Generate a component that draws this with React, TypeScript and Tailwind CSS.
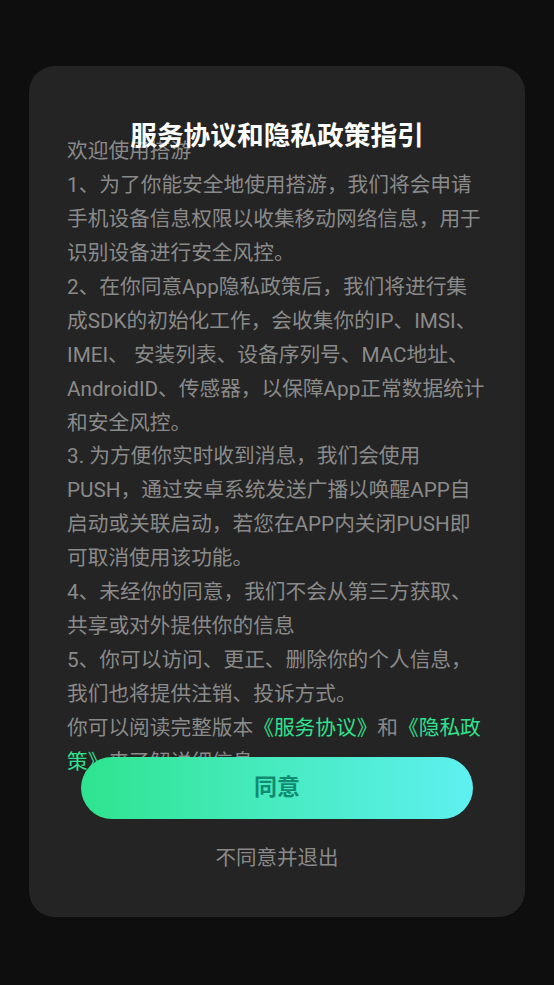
import React from "react";

const font = { fontFamily: 'Roboto, "Noto Sans CJK SC", sans-serif' };

export default function App() {
  return (
    <div
      className="min-h-[985px] w-full bg-[#0e0e0e] pt-[66px] font-[Roboto,'Noto_Sans_CJK_SC',sans-serif]"
      style={font}
    >
      <div className="mx-[29px] rounded-[26px] bg-[#242424] px-[38px] pt-[50px] pb-[44px]">
        <h1 className="relative z-10 h-[40px] text-center text-[26.7px] font-bold leading-[40px] text-white">
          服务协议和隐私政策指引
        </h1>
        <div className="-mt-[21px] text-[20.7px] leading-[33.93px] text-[#8a8a8a]">
          <p>欢迎使用搭游</p>
          <p>1、为了你能安全地使用搭游，我们将会申请手机设备信息权限以收集移动网络信息，用于识别设备进行安全风控。</p>
          <p>
            2、在你同意App隐私政策后，我们将进行集成SDK的初始化工作，会收集你的IP、IMSI、IMEI、 安装列表、设备序列号、MAC地址、AndroidID、传感器，以保障App正常数据统计和安全风控。
          </p>
          <p>3. 为方便你实时收到消息，我们会使用PUSH，通过安卓系统发送广播以唤醒APP自启动或关联启动，若您在APP内关闭PUSH即可取消使用该功能。</p>
          <p>4、未经你的同意，我们不会从第三方获取、共享或对外提供你的信息</p>
          <p>5、你可以访问、更正、删除你的个人信息，我们也将提供注销、投诉方式。</p>
          <p>
            你可以阅读完整版本<span className="text-[#2fe28f]">《服务协议》</span>和<span className="text-[#2fe28f]">《隐私政策》</span>来了解详细信息
          </p>
        </div>
        <button
          type="button"
          className="relative z-10 mx-[14px] -mt-[22.7px] flex h-[62px] w-[392px] items-center justify-center rounded-full bg-gradient-to-r from-[#2de48e] to-[#5ef0f0] text-[23px] font-semibold text-[#128a70]"
        >
          同意
        </button>
        <div className="mt-[24px] text-center text-[20.5px] leading-[30px] text-[#8a8a8a]">
          不同意并退出
        </div>
      </div>
    </div>
  );
}
